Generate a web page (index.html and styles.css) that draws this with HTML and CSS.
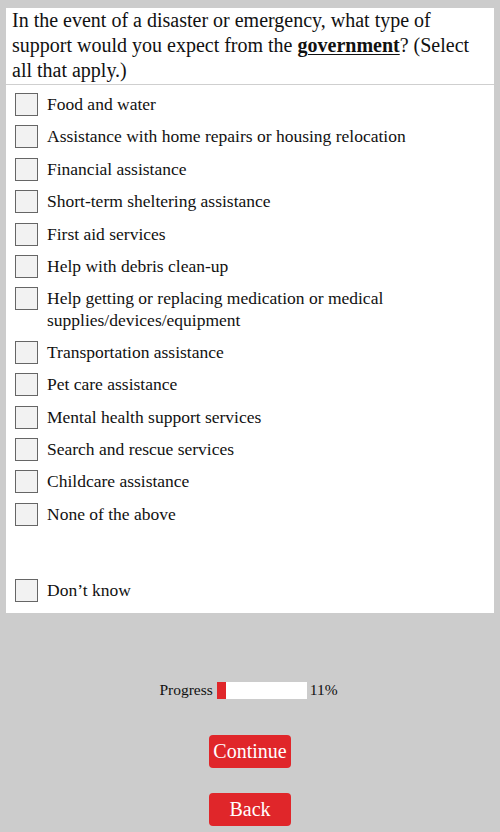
FILE: index.html
```
<!DOCTYPE html>
<html>
<head>
<meta charset="utf-8">
<link rel="stylesheet" href="styles.css">
</head>
<body>
<div class="panel">
  <div class="question">In the event of a disaster or emergency, what type of support would you expect from the <span class="em">government</span>? (Select all that apply.)</div>
  <div class="options">
    <label class="opt"><span class="box"></span><span class="lbl">Food and water</span></label>
    <label class="opt"><span class="box"></span><span class="lbl">Assistance with home repairs or housing relocation</span></label>
    <label class="opt"><span class="box"></span><span class="lbl">Financial assistance</span></label>
    <label class="opt"><span class="box"></span><span class="lbl">Short-term sheltering assistance</span></label>
    <label class="opt"><span class="box"></span><span class="lbl">First aid services</span></label>
    <label class="opt"><span class="box"></span><span class="lbl">Help with debris clean-up</span></label>
    <label class="opt"><span class="box"></span><span class="lbl">Help getting or replacing medication or medical supplies/devices/equipment</span></label>
    <label class="opt"><span class="box"></span><span class="lbl">Transportation assistance</span></label>
    <label class="opt"><span class="box"></span><span class="lbl">Pet care assistance</span></label>
    <label class="opt"><span class="box"></span><span class="lbl">Mental health support services</span></label>
    <label class="opt"><span class="box"></span><span class="lbl">Search and rescue services</span></label>
    <label class="opt"><span class="box"></span><span class="lbl">Childcare assistance</span></label>
    <label class="opt"><span class="box"></span><span class="lbl">None of the above</span></label>
    <label class="opt dk"><span class="box"></span><span class="lbl">Don’t know</span></label>
  </div>
</div>
<div class="progress">
  <span class="plabel">Progress</span>
  <span class="bar"><span class="fill" style="width:10%"></span></span>
  <span class="pct">11%</span>
</div>
<div class="buttons">
  <button class="btn">Continue</button>
  <button class="btn">Back</button>
</div>
</body>
</html>
```
FILE: styles.css
```
html, body {
  margin: 0;
  padding: 0;
  background: #cccccc;
  font-family: "Liberation Serif", serif;
  color: #111;
}
body {
  padding: 8px 6px 0 6px;
}
.panel {
  background: #fff;
  padding-bottom: 11px;
}
.question {
  font-size: 20px;
  line-height: 25px;
  padding: 0 12px 1px 6px;
  border-bottom: 1px solid #cfcfcf;
}
.em {
  font-weight: bold;
  text-decoration: underline;
  text-decoration-thickness: 1px;
  text-underline-offset: 2px;
}
.options {
  display: flex;
  flex-direction: column;
  gap: 9.4px;
  padding: 8px 0 0 9px;
}
.opt {
  display: flex;
  align-items: flex-start;
  min-height: 23px;
  font-size: 17.5px;
  line-height: 22px;
}
.opt.dk {
  margin-top: 44px;
}
.box {
  flex: none;
  width: 21px;
  height: 21px;
  border: 1px solid #666;
  background: #f2f2f2;
  margin-right: 9px;
}
.progress {
  display: flex;
  align-items: center;
  justify-content: center;
  margin-top: 68px;
  font-size: 15.5px;
  padding-right: 3px;
}
.plabel {
  margin-right: 4px;
}
.bar {
  display: block;
  width: 90px;
  height: 17px;
  background: #fff;
  margin-right: 3px;
}
.fill {
  display: block;
  height: 100%;
  background: #e0262a;
}
.buttons {
  display: flex;
  flex-direction: column;
  align-items: center;
  gap: 25px;
  margin-top: 36px;
}
.btn {
  width: 82px;
  height: 33px;
  background: #e0262a;
  color: #fff;
  border: none;
  border-radius: 4px;
  font-family: "Liberation Serif", serif;
  font-size: 20px;
  padding: 0;
}
```
